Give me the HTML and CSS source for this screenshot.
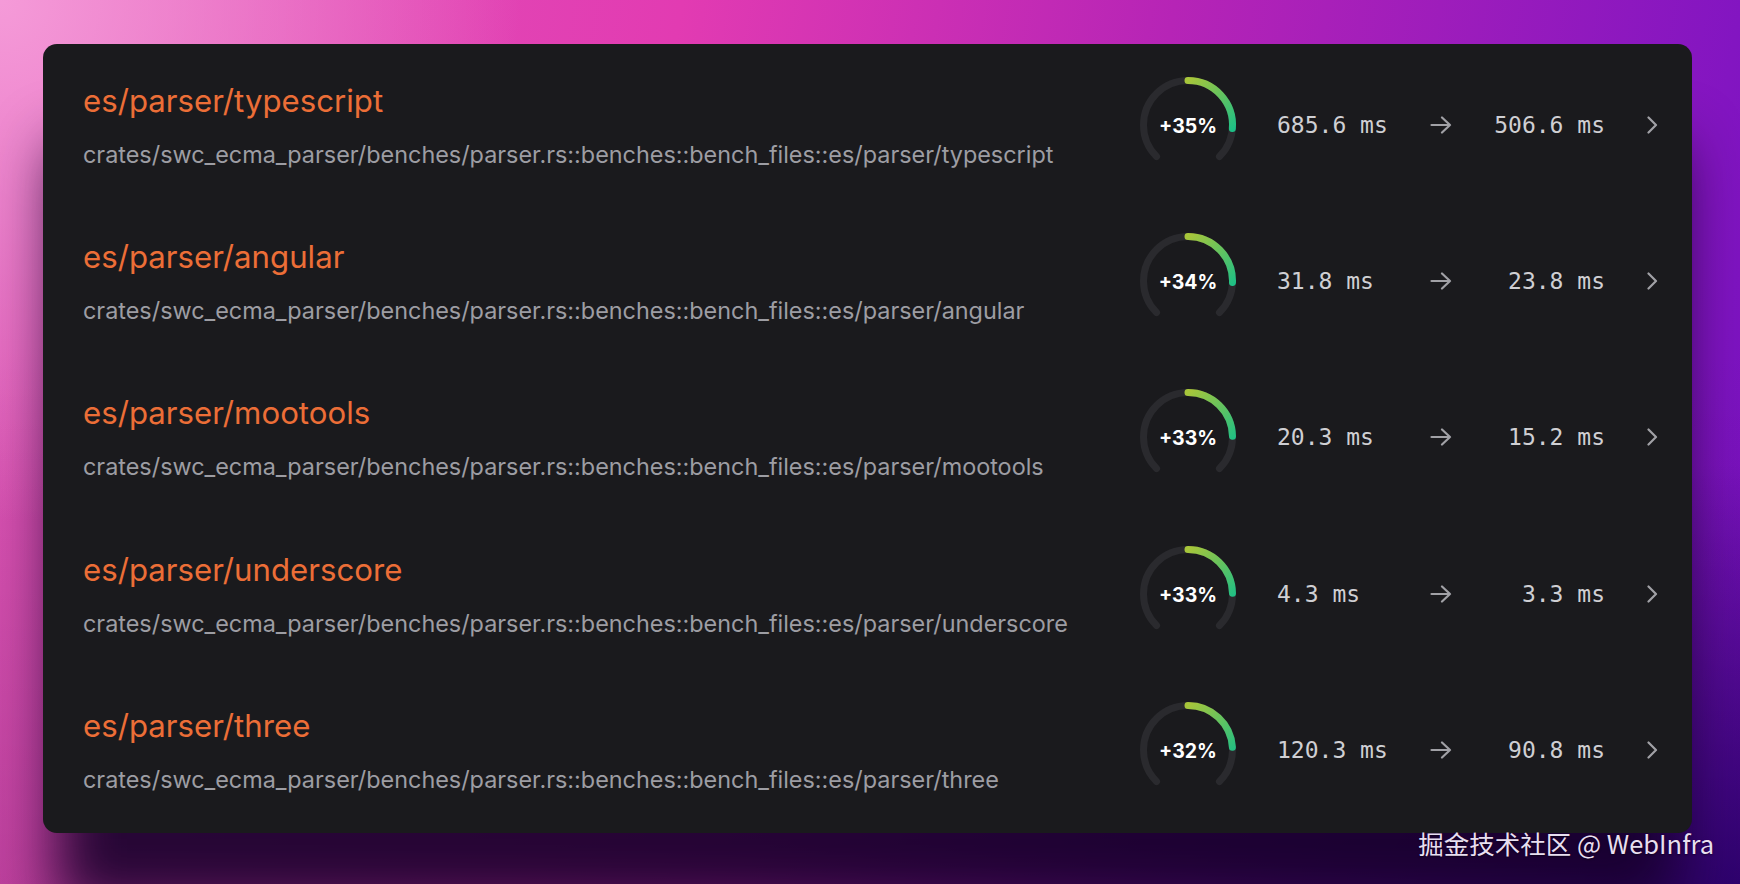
FILE: index.html
```html
<!DOCTYPE html>
<html lang="en">
<head>
<meta charset="utf-8">
<title>Benchmarks</title>
<link rel="stylesheet" href="styles.css">
</head>
<body>
<svg class="defs" width="0" height="0" aria-hidden="true">
  <defs>
    <linearGradient id="gfill" gradientUnits="userSpaceOnUse" x1="55" y1="10" x2="100" y2="60">
      <stop offset="0" stop-color="#a8c63a"/>
      <stop offset="1" stop-color="#1dbf86"/>
    </linearGradient>
  </defs>
</svg>
<div class="page">
  <div class="card">
    <div class="row">
      <div class="info">
        <div class="title">es/parser/typescript</div>
        <div class="path">crates/swc_ecma_parser/benches/parser.rs::benches::bench_files::es/parser/typescript</div>
      </div>
      <svg class="gauge" viewBox="0 0 110 110" width="110" height="110">
        <path class="track" d="M23.53 86.47 A44.5 44.5 0 1 1 86.47 86.47"/>
        <path class="fill" d="M55 10.5 A44.5 44.5 0 0 1 99.36 58.49"/>
        <text x="55" y="55.5" class="pct">+35%</text>
      </svg>
      <div class="val from">685.6 ms</div>
      <svg class="arrow" viewBox="0 0 22 18" width="22" height="18"><path d="M1.5 9 H20 M12 1.5 L20 9 L12 16.5"/></svg>
      <div class="val to">506.6 ms</div>
      <svg class="chev" viewBox="0 0 12 18" width="12" height="18"><path d="M2.5 1.5 L10 9 L2.5 16.5"/></svg>
    </div>
    <div class="row">
      <div class="info">
        <div class="title">es/parser/angular</div>
        <div class="path">crates/swc_ecma_parser/benches/parser.rs::benches::bench_files::es/parser/angular</div>
      </div>
      <svg class="gauge" viewBox="0 0 110 110" width="110" height="110">
        <path class="track" d="M23.53 86.47 A44.5 44.5 0 1 1 86.47 86.47"/>
        <path class="fill" d="M55 10.5 A44.5 44.5 0 0 1 99.48 56.40"/>
        <text x="55" y="55.5" class="pct">+34%</text>
      </svg>
      <div class="val from">31.8 ms</div>
      <svg class="arrow" viewBox="0 0 22 18" width="22" height="18"><path d="M1.5 9 H20 M12 1.5 L20 9 L12 16.5"/></svg>
      <div class="val to">23.8 ms</div>
      <svg class="chev" viewBox="0 0 12 18" width="12" height="18"><path d="M2.5 1.5 L10 9 L2.5 16.5"/></svg>
    </div>
    <div class="row">
      <div class="info">
        <div class="title">es/parser/mootools</div>
        <div class="path">crates/swc_ecma_parser/benches/parser.rs::benches::bench_files::es/parser/mootools</div>
      </div>
      <svg class="gauge" viewBox="0 0 110 110" width="110" height="110">
        <path class="track" d="M23.53 86.47 A44.5 44.5 0 1 1 86.47 86.47"/>
        <path class="fill" d="M55 10.5 A44.5 44.5 0 0 1 99.49 54.30"/>
        <text x="55" y="55.5" class="pct">+33%</text>
      </svg>
      <div class="val from">20.3 ms</div>
      <svg class="arrow" viewBox="0 0 22 18" width="22" height="18"><path d="M1.5 9 H20 M12 1.5 L20 9 L12 16.5"/></svg>
      <div class="val to">15.2 ms</div>
      <svg class="chev" viewBox="0 0 12 18" width="12" height="18"><path d="M2.5 1.5 L10 9 L2.5 16.5"/></svg>
    </div>
    <div class="row">
      <div class="info">
        <div class="title">es/parser/underscore</div>
        <div class="path">crates/swc_ecma_parser/benches/parser.rs::benches::bench_files::es/parser/underscore</div>
      </div>
      <svg class="gauge" viewBox="0 0 110 110" width="110" height="110">
        <path class="track" d="M23.53 86.47 A44.5 44.5 0 1 1 86.47 86.47"/>
        <path class="fill" d="M55 10.5 A44.5 44.5 0 0 1 99.49 54.30"/>
        <text x="55" y="55.5" class="pct">+33%</text>
      </svg>
      <div class="val from">4.3 ms</div>
      <svg class="arrow" viewBox="0 0 22 18" width="22" height="18"><path d="M1.5 9 H20 M12 1.5 L20 9 L12 16.5"/></svg>
      <div class="val to">3.3 ms</div>
      <svg class="chev" viewBox="0 0 12 18" width="12" height="18"><path d="M2.5 1.5 L10 9 L2.5 16.5"/></svg>
    </div>
    <div class="row">
      <div class="info">
        <div class="title">es/parser/three</div>
        <div class="path">crates/swc_ecma_parser/benches/parser.rs::benches::bench_files::es/parser/three</div>
      </div>
      <svg class="gauge" viewBox="0 0 110 110" width="110" height="110">
        <path class="track" d="M23.53 86.47 A44.5 44.5 0 1 1 86.47 86.47"/>
        <path class="fill" d="M55 10.5 A44.5 44.5 0 0 1 99.41 52.21"/>
        <text x="55" y="55.5" class="pct">+32%</text>
      </svg>
      <div class="val from">120.3 ms</div>
      <svg class="arrow" viewBox="0 0 22 18" width="22" height="18"><path d="M1.5 9 H20 M12 1.5 L20 9 L12 16.5"/></svg>
      <div class="val to">90.8 ms</div>
      <svg class="chev" viewBox="0 0 12 18" width="12" height="18"><path d="M2.5 1.5 L10 9 L2.5 16.5"/></svg>
    </div>
  </div>
  <div class="watermark">掘金技术社区 @ WebInfra</div>
</div>
</body>
</html>
```

FILE: styles.css
```css
* { box-sizing: border-box; }
html, body { margin: 0; padding: 0; }
body { width: 1740px; height: 884px; overflow: hidden; font-family: Inter, "Noto Sans", sans-serif; }

.defs { position: absolute; width: 0; height: 0; }

.page {
  position: relative;
  width: 1740px;
  height: 884px;
  padding: 44px 48px 51px 43px;
  background:
    radial-gradient(ellipse 520px 520px at 0% 0%, rgba(246,158,218,0.95), rgba(246,158,218,0) 100%),
    radial-gradient(ellipse 1000px 420px at 100% 100%, rgba(36,0,100,0.85), rgba(36,0,100,0) 100%),
    linear-gradient(to bottom, rgba(70,0,70,0) 40%, rgba(70,0,70,0.22) 100%),
    linear-gradient(100deg, #e05ab8 0%, #e23bb2 36%, #b624b6 62%, #7511c4 100%);
}

.card {
  width: 1649px;
  height: 789px;
  background: #1a1a1d;
  border-radius: 14px;
  display: flex;
  flex-direction: column;
  box-shadow: 0 90px 60px -12px rgba(22, 0, 42, 0.9);
}

.row {
  flex: none;
  height: 156.2px;
  display: flex;
  align-items: flex-start;
  padding: 0 34px 0 40px;
}

.info {
  flex: 1;
  padding-top: 37px;
  min-width: 0;
}

.title {
  color: #ec6e37;
  font-size: 31.2px;
  line-height: 40px;
  font-weight: 400;
  white-space: nowrap;
}

.path {
  margin-top: 20px;
  color: #9d9da3;
  font-size: 23.4px;
  line-height: 28px;
  white-space: nowrap;
}

.gauge {
  flex: none;
  margin-top: 26px;
  margin-right: 34px;
}
.track {
  fill: none;
  stroke: #2a2a2e;
  stroke-width: 7;
  stroke-linecap: round;
}
.fill {
  fill: none;
  stroke: url(#gfill);
  stroke-width: 7;
  stroke-linecap: round;
}
.pct {
  fill: #ffffff;
  font-family: Inter, sans-serif;
  font-weight: 700;
  font-size: 19.5px;
  text-anchor: middle;
  dominant-baseline: central;
}

.val {
  flex: none;
  width: 150px;
  margin-top: 67px;
  font-family: "DejaVu Sans Mono", "Liberation Mono", monospace;
  font-size: 23px;
  line-height: 28px;
  color: #cfcfd3;
  white-space: nowrap;
}
.val.to { text-align: right; }

.arrow {
  flex: none;
  margin: 72px 3px 0;
  fill: none;
  stroke: #a1a1a6;
  stroke-width: 2.2;
  stroke-linecap: round;
  stroke-linejoin: round;
}

.chev {
  flex: none;
  margin: 72px 0 0 41px;
  fill: none;
  stroke: #a1a1a6;
  stroke-width: 2.2;
  stroke-linecap: round;
  stroke-linejoin: round;
}

.watermark {
  position: absolute;
  right: 26px;
  top: 825px;
  font-family: "Noto Sans CJK SC", "Noto Sans", sans-serif;
  font-size: 25.5px;
  line-height: 36px;
  color: #e8dff0;
  text-shadow: 0 1px 2px rgba(0,0,0,0.5);
  white-space: nowrap;
}
```
